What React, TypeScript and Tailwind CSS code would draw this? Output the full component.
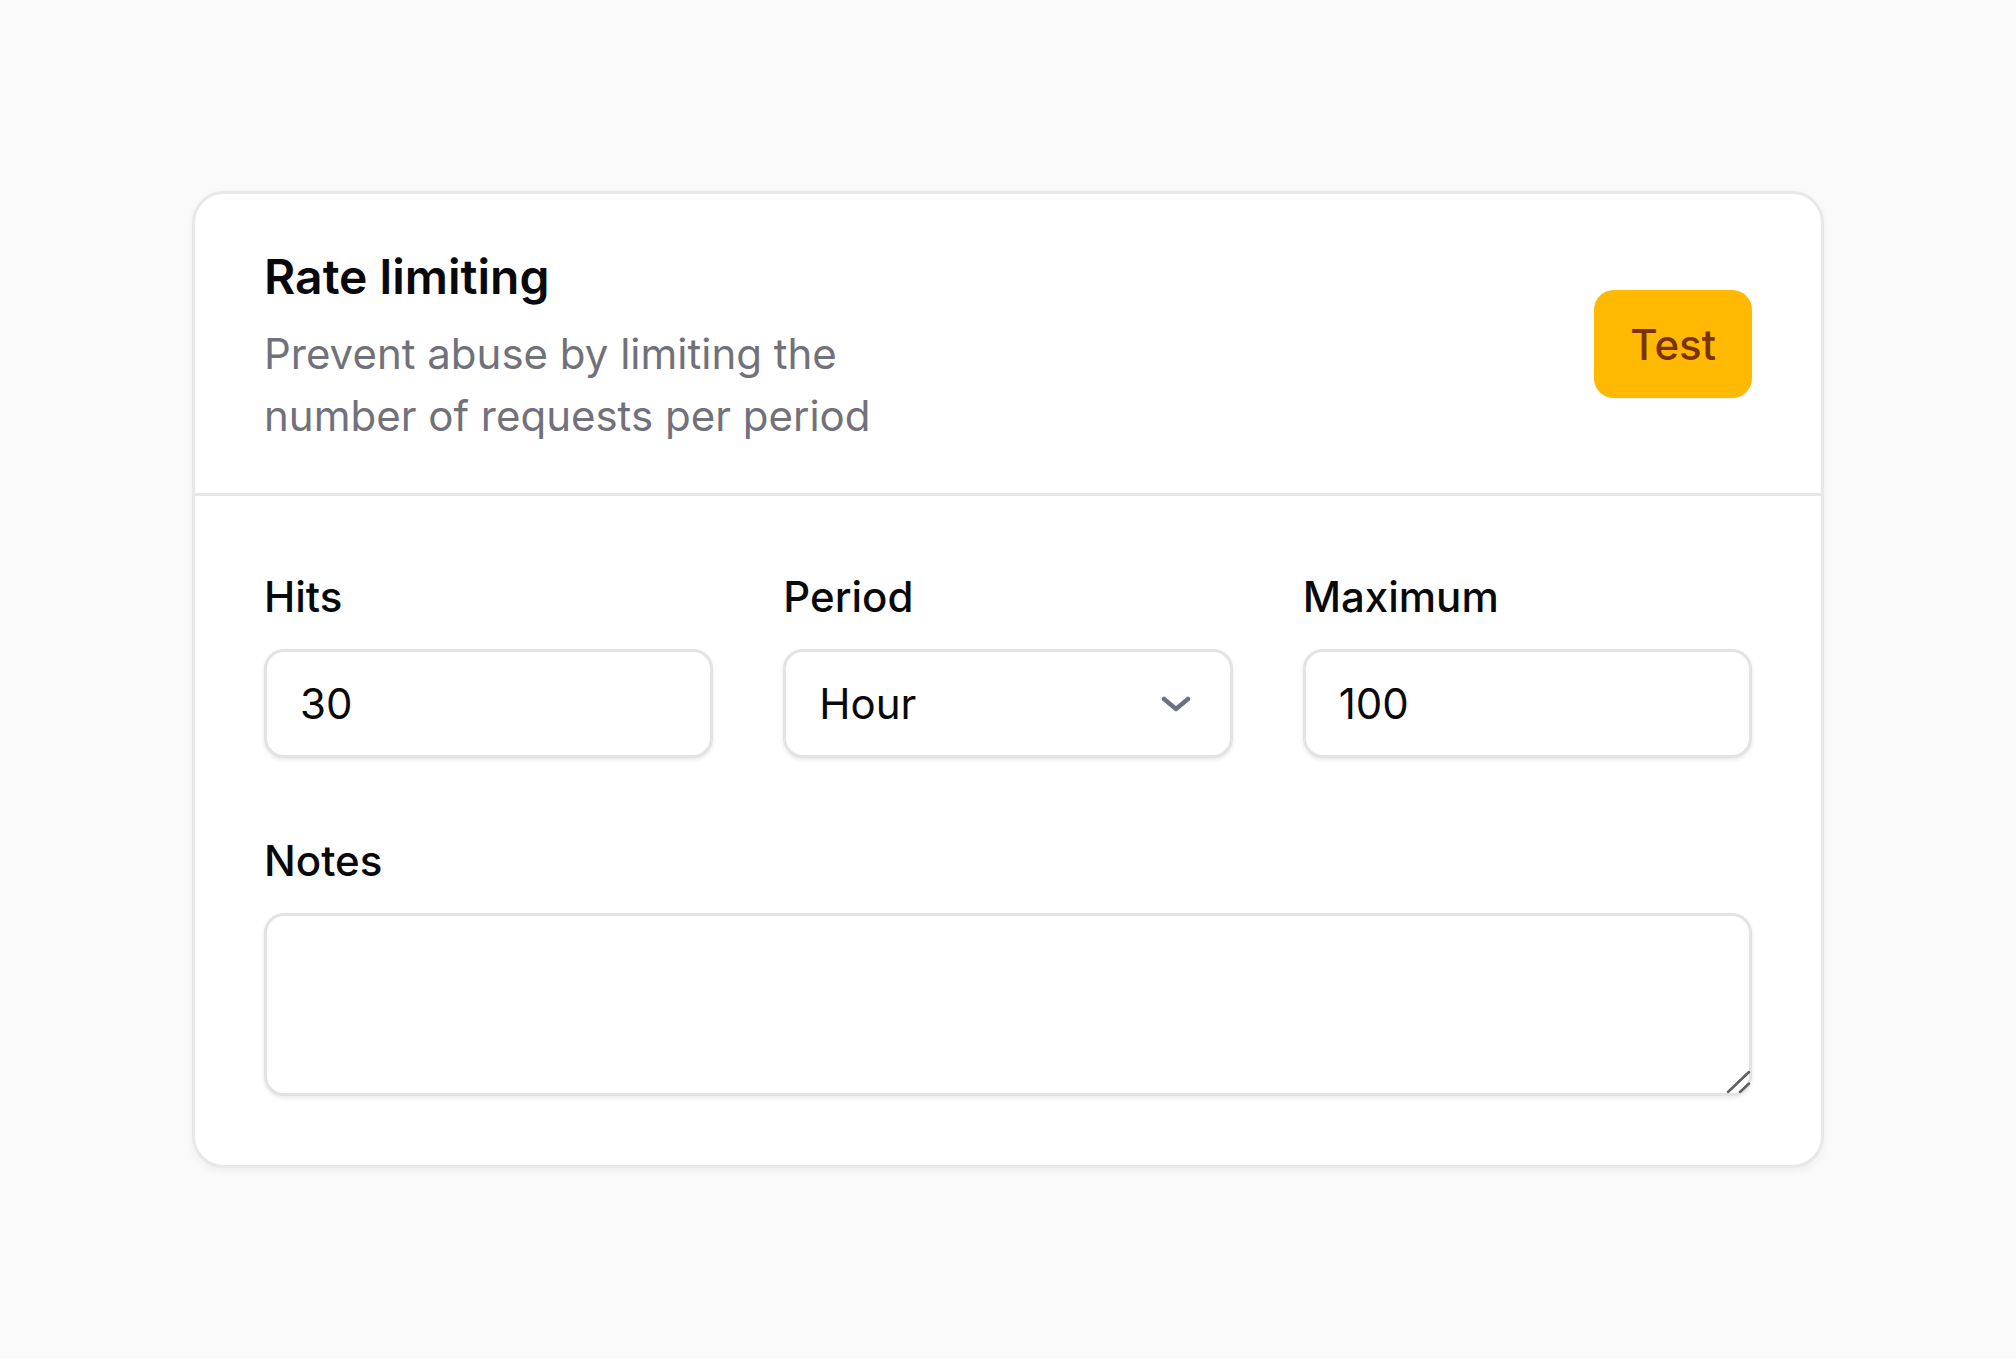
import React, { useState } from 'react';

const ChevronDown = () => (
    <svg width="30" height="16" viewBox="0 0 30 16" fill="none" className="pointer-events-none absolute right-[42px] top-1/2 -translate-y-1/2">
        <polyline points="3,3 15,13 27,3" stroke="#6b7280" strokeWidth="4.5" strokeLinecap="round" strokeLinejoin="round" />
    </svg>
);

const ResizeGrip = () => (
    <svg width="28" height="28" viewBox="0 0 28 28" fill="none" className="pointer-events-none absolute right-0 bottom-0">
        <line x1="4" y1="24" x2="25" y2="4" stroke="#5f5f5f" strokeWidth="2.5" strokeLinecap="round" />
        <line x1="16" y1="24" x2="25" y2="15.5" stroke="#5f5f5f" strokeWidth="2.5" strokeLinecap="round" />
    </svg>
);

const fieldClass =
    "w-full h-[109px] rounded-[20px] border-[3px] border-[#e3e3e3] bg-white px-[33px] text-[42px] leading-[62px] text-zinc-950 shadow-[0_2px_4px_rgba(0,0,0,0.09)] outline-none";

const labelClass = "block text-[42px] leading-[62px] font-medium text-zinc-950";

export default function App() {
    const [hits, setHits] = useState('30');
    const [period, setPeriod] = useState('hour');
    const [maximum, setMaximum] = useState('100');
    const [notes, setNotes] = useState('');

    return (
        <div className="min-h-screen w-full bg-[#fafafa] flex items-center justify-center font-['Inter','Liberation_Sans',sans-serif]">
            <div className="w-[1632px] rounded-[32px] border-[3px] border-[#e8e8e8] bg-white shadow-[0_3px_8px_rgba(0,0,0,0.05)]">
                {/* Header */}
                <div className="flex items-center justify-between px-[69px] pt-[47px] pb-[46px]">
                    <div>
                        <h2 className="text-[48px] leading-[72px] font-semibold text-zinc-950">Rate limiting</h2>
                        <p className="mt-[10px] max-w-[672px] text-[42px] leading-[62px] text-zinc-500">
                            Prevent abuse by limiting the number of requests per period
                        </p>
                    </div>
                    <button className="h-[108px] px-[36px] rounded-[20px] bg-amber-400 text-amber-900 text-[42px] font-medium shadow-[0_1px_3px_rgba(0,0,0,0.06)]">
                        Test
                    </button>
                </div>

                <div className="h-[3px] bg-[#e6e6e6]" />

                {/* Form */}
                <div className="px-[69px] pt-[70px] pb-[69px] flex flex-col gap-[72px]">
                    <div className="grid grid-cols-3 gap-x-[70px]">
                        <div>
                            <label className={labelClass}>Hits</label>
                            <input
                                value={hits}
                                onChange={e => setHits(e.target.value)}
                                className={`mt-[21px] ${fieldClass}`}
                            />
                        </div>
                        <div>
                            <label className={labelClass}>Period</label>
                            <div className="relative mt-[21px]">
                                <select
                                    value={period}
                                    onChange={e => setPeriod(e.target.value)}
                                    className={`appearance-none ${fieldClass}`}
                                >
                                    <option value="minute">Minute</option>
                                    <option value="hour">Hour</option>
                                    <option value="day">Day</option>
                                </select>
                                <ChevronDown />
                            </div>
                        </div>
                        <div>
                            <label className={labelClass}>Maximum</label>
                            <input
                                value={maximum}
                                onChange={e => setMaximum(e.target.value)}
                                className={`mt-[21px] ${fieldClass}`}
                            />
                        </div>
                    </div>

                    <div>
                        <label className={labelClass}>Notes</label>
                        <div className="relative mt-[21px]">
                            <textarea
                                value={notes}
                                onChange={e => setNotes(e.target.value)}
                                className="block w-full h-[183px] resize-none rounded-[20px] border-[3px] border-[#e3e3e3] bg-white px-[33px] py-[20px] text-[42px] leading-[62px] text-zinc-950 shadow-[0_2px_4px_rgba(0,0,0,0.09)] outline-none"
                            />
                            <ResizeGrip />
                        </div>
                    </div>
                </div>
            </div>
        </div>
    );
}
